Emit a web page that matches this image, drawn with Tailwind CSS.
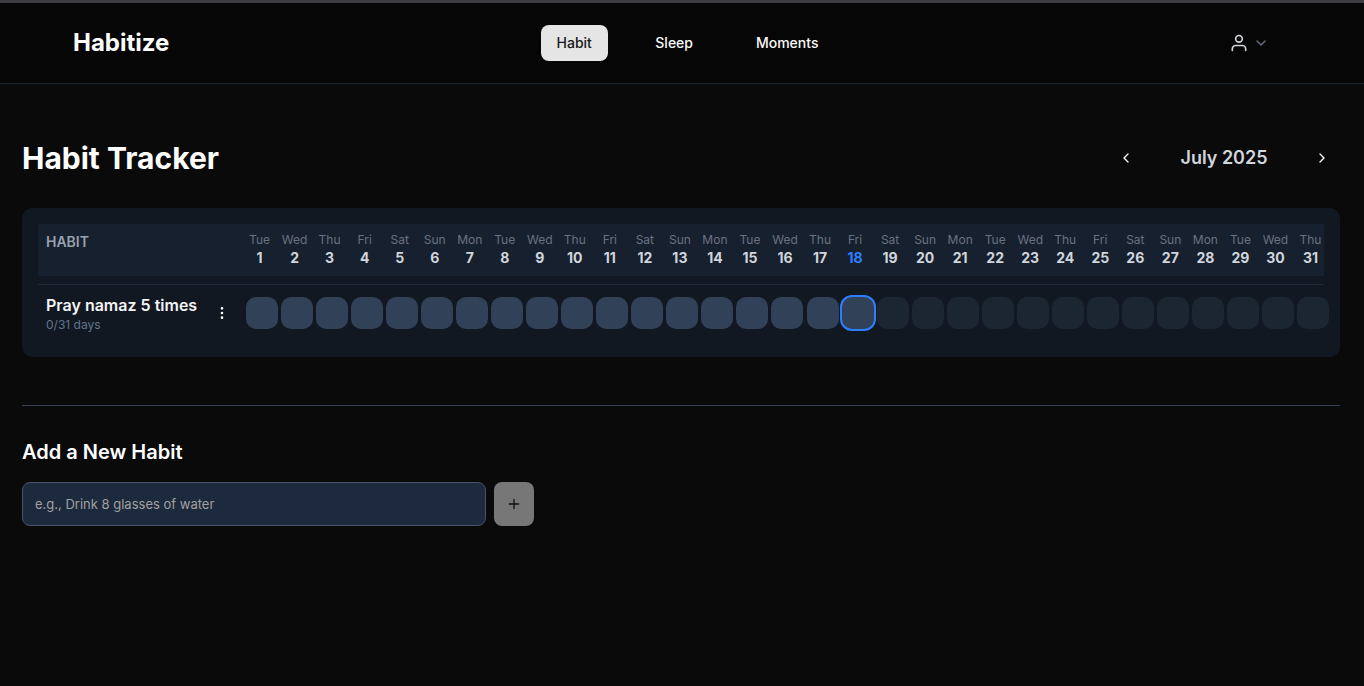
<!DOCTYPE html>
<html lang="en">
<head>
<meta charset="utf-8">
<meta name="viewport" content="width=device-width, initial-scale=1">
<title>Habitize</title>
<script src="https://cdn.jsdelivr.net/npm/@tailwindcss/browser@4"></script>
</head>
<body class="min-h-screen bg-[#0a0a0a] font-['Inter','Liberation_Sans',sans-serif] text-white">
<header class="border-t-3 border-t-[#3b3b41] border-b border-b-[#1e2532] bg-[#060606]">
  <div class="flex h-20 items-center justify-between pl-[73px] pr-[71px]">
    <a href="#" class="text-2xl leading-8 font-bold">Habitize</a>
    <nav class="flex gap-8 text-sm font-medium">
      <a href="#" class="flex h-9 w-[67px] items-center justify-center rounded-lg bg-[#e5e5e5] text-[#171717]">Habit</a>
      <a href="#" class="flex h-9 w-[69px] items-center justify-center rounded-lg text-[#fafafa]">Sleep</a>
      <a href="#" class="flex h-9 w-[93px] items-center justify-center rounded-lg text-[#fafafa]">Moments</a>
    </nav>
    <button type="button" aria-label="Account" class="flex items-center gap-1 px-6">
      <svg class="size-5 text-gray-300" viewBox="0 0 24 24" fill="none" stroke="currentColor" stroke-width="2" stroke-linecap="round" stroke-linejoin="round"><path d="M20 21v-2a4 4 0 0 0-4-4H8a4 4 0 0 0-4 4v2"/><circle cx="12" cy="7" r="4"/></svg>
      <svg class="size-4 text-gray-500" viewBox="0 0 24 24" fill="none" stroke="currentColor" stroke-width="2" stroke-linecap="round" stroke-linejoin="round"><path d="m6 9 6 6 6-6"/></svg>
    </button>
  </div>
</header>
<main class="pt-[54px] pr-6 pl-[22px]">
  <div class="flex items-center justify-between">
    <h1 class="text-3xl leading-10 font-bold">Habit Tracker</h1>
    <div class="flex items-center gap-4">
      <button type="button" aria-label="Previous month" class="flex size-9 items-center justify-center"><svg class="size-4" viewBox="0 0 24 24" fill="none" stroke="currentColor" stroke-width="2" stroke-linecap="round" stroke-linejoin="round"><path d="m15 18-6-6 6-6"/></svg></button>
      <h2 class="w-32 text-center text-lg font-semibold text-gray-300">July 2025</h2>
      <button type="button" aria-label="Next month" class="flex size-9 items-center justify-center"><svg class="size-4" viewBox="0 0 24 24" fill="none" stroke="currentColor" stroke-width="2" stroke-linecap="round" stroke-linejoin="round"><path d="m9 18 6-6-6-6"/></svg></button>
    </div>
  </div>
  <section class="mt-[30px] rounded-[10px] bg-[#121821] p-4">
    <div id="days" class="mb-2 grid h-13 grid-cols-[200px_repeat(31,minmax(0,1fr))] gap-x-2 bg-[#17202e] py-2">
      <div class="pl-2 text-sm font-semibold text-gray-400">HABIT</div>
    </div>
    <div id="habit" class="grid grid-cols-[200px_repeat(31,minmax(0,1fr))] items-center gap-x-2 border-t border-[#1f2a3a] py-2">
      <div class="flex items-center justify-between pl-2">
        <div>
          <div class="text-base font-semibold whitespace-nowrap text-gray-100">Pray namaz 5 times</div>
          <div class="text-xs text-[#62748e]">0/31 days</div>
        </div>
        <button type="button" aria-label="Habit options" class="flex size-8 shrink-0 items-center justify-center"><svg class="size-4" viewBox="0 0 24 24" fill="none" stroke="currentColor" stroke-width="2"><circle cx="12" cy="12" r="1"/><circle cx="12" cy="5" r="1"/><circle cx="12" cy="19" r="1"/></svg></button>
      </div>
    </div>
  </section>
  <section class="mt-12 border-t border-[#364153] pt-8">
    <h2 class="text-xl leading-7 font-semibold">Add a New Habit</h2>
    <form class="mt-4 flex gap-2" onsubmit="return false">
      <input type="text" aria-label="New habit" placeholder="e.g., Drink 8 glasses of water" class="h-11 w-full max-w-[464px] rounded-lg border border-[#45556c] bg-[#1d293d] px-3 text-[13px] text-white placeholder:text-[#a1a1a1]">
      <button type="submit" aria-label="Add habit" class="flex h-11 w-10 shrink-0 items-center justify-center rounded-lg bg-[#777777] text-[#111111]"><svg class="size-4" viewBox="0 0 24 24" fill="none" stroke="currentColor" stroke-width="2" stroke-linecap="round"><path d="M5 12h14M12 5v14"/></svg></button>
    </form>
  </section>
</main>
<script>
const names = ['Sun', 'Mon', 'Tue', 'Wed', 'Thu', 'Fri', 'Sat'];
const today = 18;
const days = document.getElementById('days');
const habit = document.getElementById('habit');
for (let d = 1; d <= 31; d++) {
  const name = names[(d + 1) % 7];
  const color = d === today ? 'text-[#2b7fff]' : 'text-gray-300';
  days.insertAdjacentHTML('beforeend', `<div class="flex flex-col items-center"><span class="text-xs text-gray-500">${name}</span><span class="text-sm font-bold ${color}">${d}</span></div>`);
  const state = d > today ? 'bg-[#1b2630]' : d === today ? 'bg-[#314158] ring-2 ring-[#2b7fff]' : 'bg-[#314158]';
  habit.insertAdjacentHTML('beforeend', `<button type="button" aria-label="July ${d}" class="size-8 rounded-[10px] ${state}"></button>`);
}
</script>
</body>
</html>
